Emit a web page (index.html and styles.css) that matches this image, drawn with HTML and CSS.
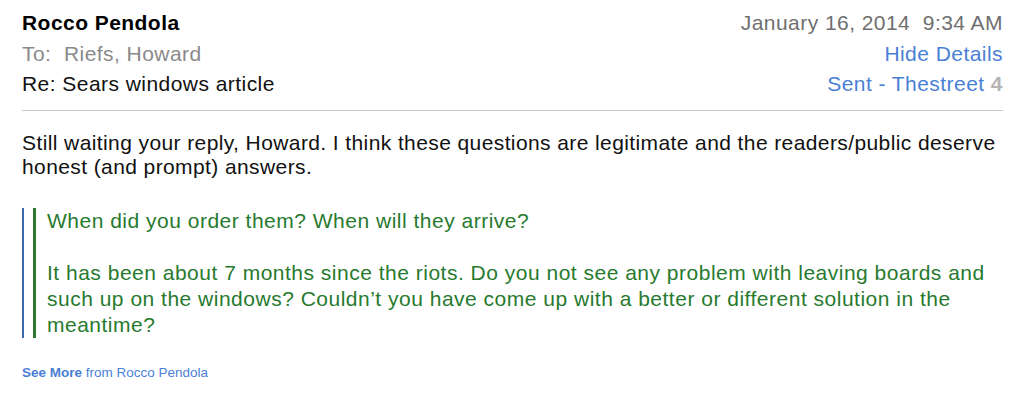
FILE: index.html
```html
<!DOCTYPE html>
<html lang="en">
<head>
    <meta charset="UTF-8">
    <link rel="stylesheet" href="styles.css">
    <title>Re: Sears windows article</title>
</head>
<body>
    <div class="mail">
        <div class="header">
            <div class="meta">
                <div class="from">Rocco Pendola</div>
                <div class="to">To:&nbsp; Riefs, Howard</div>
                <div class="subject">Re: Sears windows article</div>
            </div>
            <div class="side">
                <div class="date">January 16, 2014&nbsp; 9:34 AM</div>
                <div class="link">Hide Details</div>
                <div class="link">Sent - Thestreet <span class="count">4</span></div>
            </div>
        </div>

        <div class="body">
            <p class="lead">Still waiting your reply, Howard. I think these questions are legitimate and the readers/public deserve honest (and prompt) answers.</p>

            <div class="quote-outer">
                <div class="quote-inner">
                    <p>When did you order them? When will they arrive?</p>
                    <p>It has been about 7 months since the riots. Do you not see any problem with leaving boards and such up on the windows? Couldn’t you have come up with a better or different solution in the meantime?</p>
                </div>
            </div>

            <div class="more"><b>See More</b> from Rocco Pendola</div>
        </div>
    </div>
</body>
</html>
```

FILE: styles.css
```css
body {
  margin: 0;
  background: #ffffff;
  font-family: "Liberation Sans", Arial, sans-serif;
  color: #111111;
}

.mail {
  padding: 8px 21px 0 22px;
}

.header {
  display: flex;
  justify-content: space-between;
  border-bottom: 1px solid #c8c8c8;
  padding-bottom: 10px;
  font-size: 21px;
  line-height: 30.5px;
  letter-spacing: 0.45px;
}

.from {
  font-weight: bold;
  color: #000000;
}

.to {
  color: #8a8a8a;
}

.subject {
  color: #111111;
}

.side {
  text-align: right;
}

.date {
  color: #6f6f6f;
}

.link {
  color: #4a7fd6;
}

.count {
  color: #b4b4b4;
  font-weight: bold;
}

.body {
  padding-top: 20px;
  font-size: 21px;
  line-height: 24px;
}

.lead {
  margin: 0;
  letter-spacing: 0.4px;
}

.quote-outer {
  margin-top: 29px;
  border-left: 2px solid #3b67b3;
  padding-left: 9px;
}

.quote-inner {
  border-left: 3px solid #2e7a34;
  padding-left: 11px;
  color: #277a2e;
  line-height: 26px;
  letter-spacing: 0.5px;
}

.quote-inner p {
  margin: 0 0 26px 0;
}

.quote-inner p:last-child {
  margin-bottom: 0;
}

.more {
  margin-top: 26px;
  font-size: 13.5px;
  line-height: 17px;
  color: #4a7fd6;
}
```
